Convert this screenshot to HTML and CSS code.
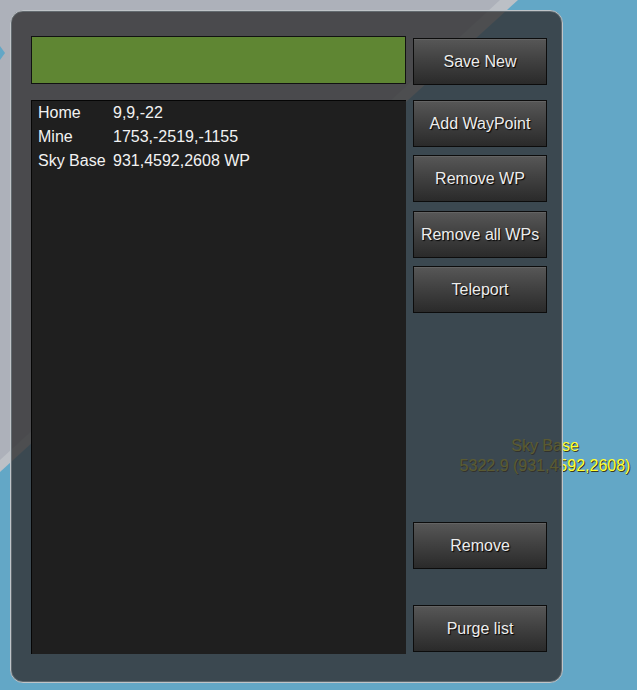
FILE: index.html
```html
<!DOCTYPE html>
<html>
<head>
<meta charset="utf-8">
<link rel="stylesheet" href="styles.css">
</head>
<body>
<svg class="scene" width="637" height="690" viewBox="0 0 637 690">
  <rect width="637" height="690" fill="#63a7c6"/>
  <polygon points="0,0 518,0 0,472" fill="#bcc0c6"/>
  <polygon points="0,0 500,0 0,460" fill="#adb1ba"/>
  <polygon points="0,46 5,53 0,60" fill="#63a7c6"/>
</svg>
<div class="marker">
  <div>Sky Base</div>
  <div>5322.9 (931,4592,2608)</div>
</div>
<div class="panel">
  <div class="left">
    <div class="namebox"></div>
    <div class="list">
      <div class="row"><span class="name">Home</span><span>9,9,-22</span></div>
      <div class="row"><span class="name">Mine</span><span>1753,-2519,-1155</span></div>
      <div class="row"><span class="name">Sky Base</span><span>931,4592,2608 WP</span></div>
    </div>
  </div>
  <div class="right">
    <button class="btn b-save">Save New</button>
    <button class="btn b-add">Add WayPoint</button>
    <button class="btn b-rwp">Remove WP</button>
    <button class="btn b-rall">Remove all WPs</button>
    <button class="btn b-tp">Teleport</button>
    <button class="btn b-rem">Remove</button>
    <button class="btn b-purge">Purge list</button>
  </div>
</div>
</body>
</html>
```

FILE: styles.css
```css
html, body {
  margin: 0;
  padding: 0;
  width: 637px;
  height: 690px;
  overflow: hidden;
  font-family: "Liberation Sans", Arial, sans-serif;
}
body {
  position: relative;
  background: #63a7c6;
}
.scene {
  position: absolute;
  left: 0;
  top: 0;
  z-index: 0;
}
.marker {
  position: absolute;
  left: 445px;
  top: 436px;
  width: 200px;
  text-align: center;
  font-size: 16px;
  line-height: 20px;
  color: #ffff33;
  text-shadow: 1px 1px 0 #3a3a20;
  z-index: 1;
}
.panel {
  position: relative;
  z-index: 2;
  margin: 10px 0 0 10px;
  width: 553px;
  height: 673px;
  box-sizing: border-box;
  border: 1px solid #bfc4c8;
  border-radius: 13px;
  box-shadow: inset 0 0 0 1px rgba(110, 120, 126, 0.7);
  background: rgba(49, 49, 50, 0.8);
  padding: 25px 15px 0 20px;
  display: flex;
  gap: 7px;
}
.left {
  width: 375px;
  display: flex;
  flex-direction: column;
}
.namebox {
  height: 48px;
  box-sizing: border-box;
  background: #5f8633;
  border: 1px solid #111;
}
.list {
  margin-top: 16px;
  height: 554px;
  box-sizing: border-box;
  background: #1f1f1f;
  border-left: 1px solid #050505;
  border-top: 1px solid #050505;
  padding: 0 0 0 6px;
  color: #f2f2f2;
  font-size: 16px;
}
.row {
  display: flex;
  line-height: 24px;
  height: 24px;
}
.name {
  width: 75px;
}
.right {
  width: 134px;
  display: flex;
  flex-direction: column;
}
.btn {
  display: block;
  width: 134px;
  height: 47px;
  box-sizing: border-box;
  border: 1px solid #0c0c0c;
  border-radius: 0;
  background: linear-gradient(to bottom, #575757 0%, #424242 45%, #2a2a2a 100%);
  box-shadow: inset 0 1px 0 rgba(255, 255, 255, 0.08);
  color: #ededed;
  font-family: "Liberation Sans", Arial, sans-serif;
  font-size: 16px;
  text-shadow: 1px 1px 1px #000;
  padding: 0;
  margin: 0;
}
.b-save { margin-top: 2px; }
.b-add { margin-top: 15px; }
.b-rwp { margin-top: 8px; }
.b-rall { margin-top: 9px; }
.b-tp { margin-top: 8px; }
.b-rem { margin-top: 209px; }
.b-purge { margin-top: 36px; }
```
